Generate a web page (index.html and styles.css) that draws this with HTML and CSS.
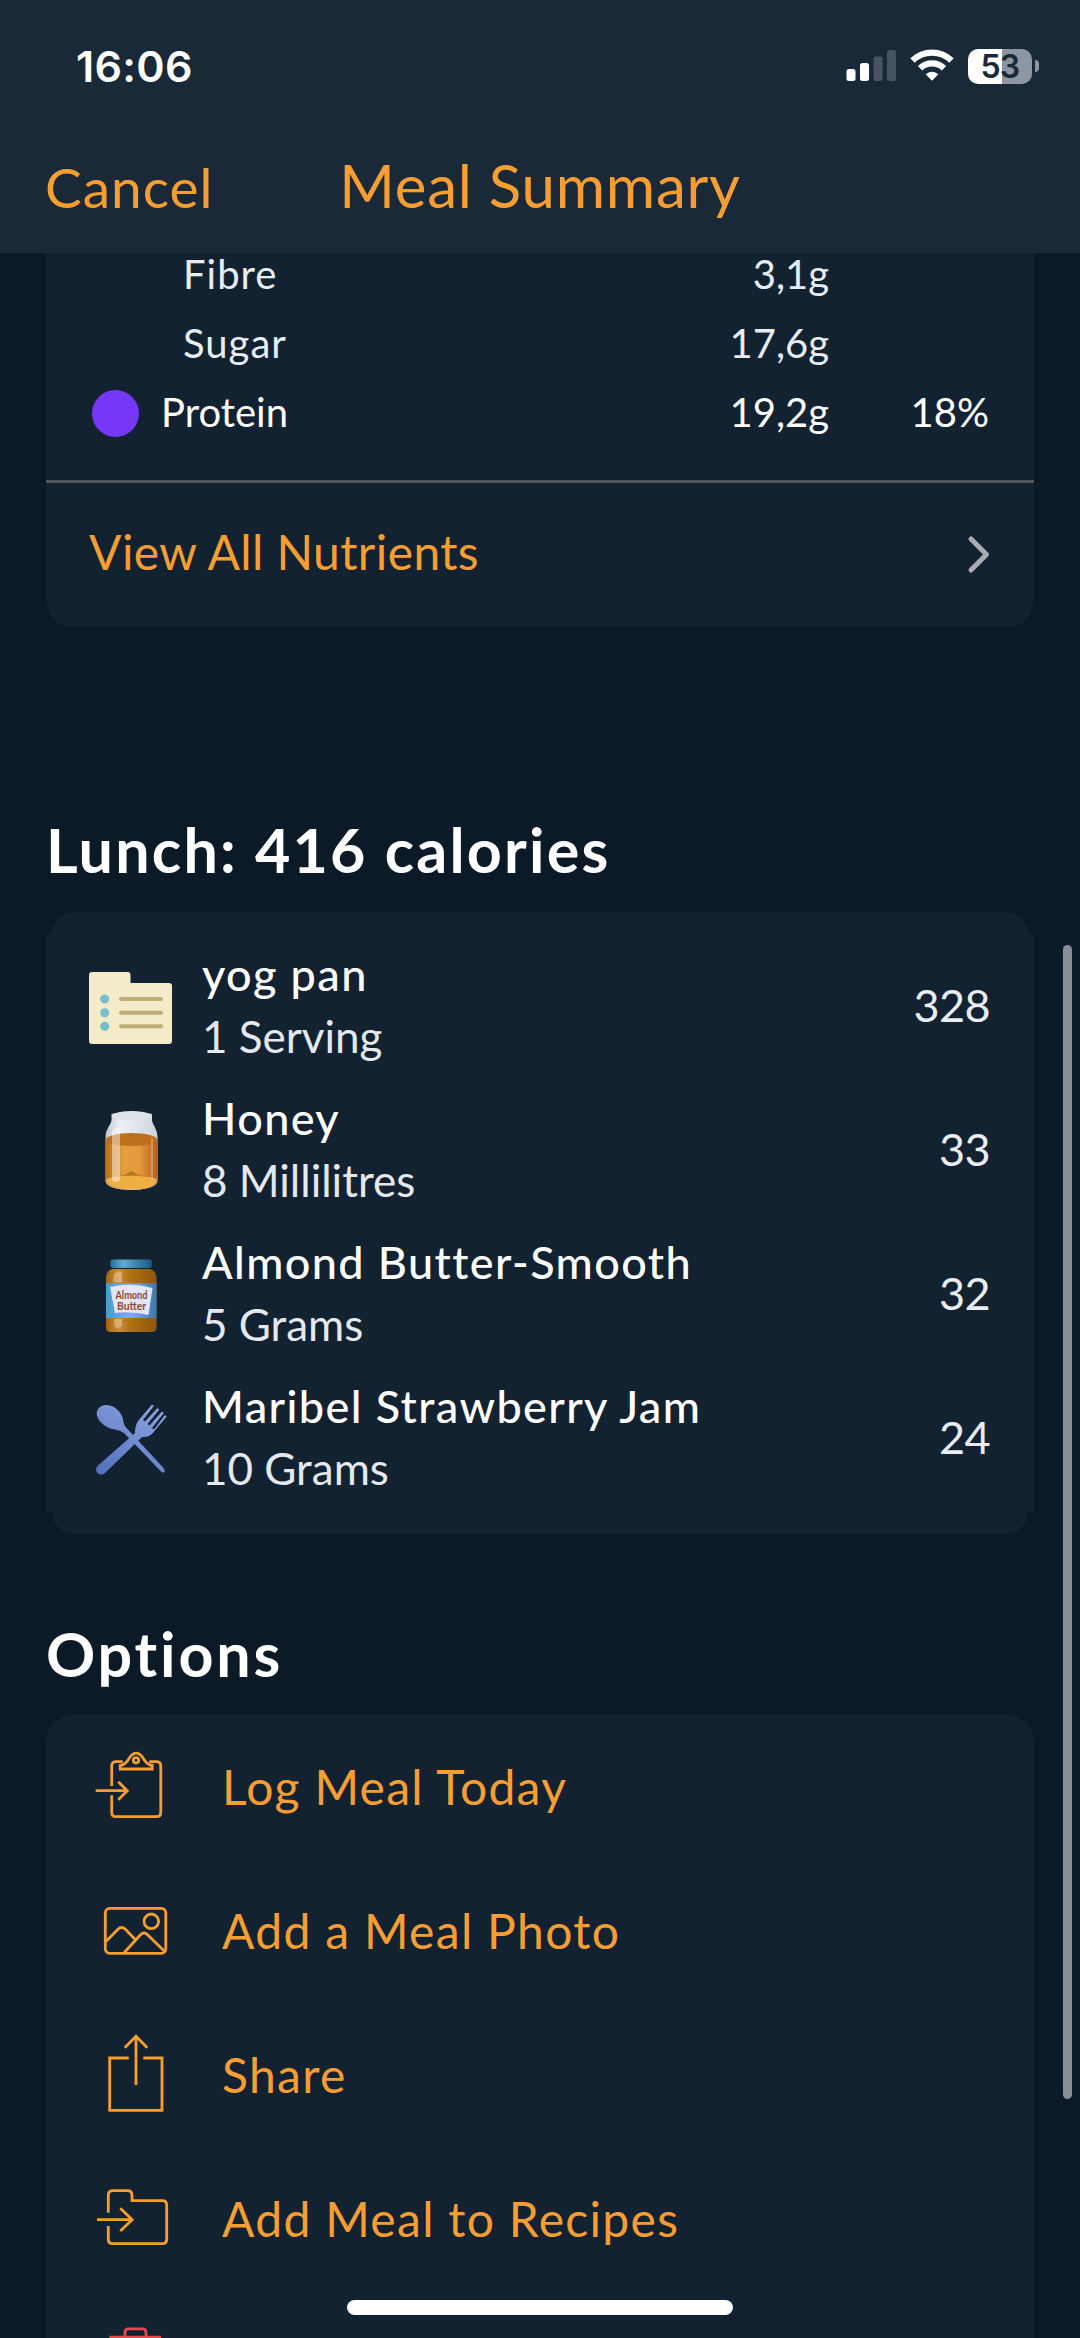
FILE: index.html
```html
<!DOCTYPE html>
<html lang="en">
<head>
    <meta charset="UTF-8">
    <meta name="viewport" content="width=device-width, initial-scale=1.0">
    <title>Meal Summary</title>
    <link rel="stylesheet" href="styles.css">
</head>
<body>

    <!-- Header -->
    <header class="header">
        <div class="status-bar">
            <span class="time">16:06</span>
            <div class="status-icons">
                <svg class="signal" width="50" height="36" viewBox="0 0 50 36">
                    <rect x="0.5" y="21" width="9" height="12" rx="2.5" fill="#fff"/>
                    <rect x="14" y="15" width="9" height="18" rx="2.5" fill="#fff"/>
                    <rect x="27.5" y="8.5" width="9" height="24.5" rx="2.5" fill="#475463"/>
                    <rect x="41" y="2" width="9" height="31" rx="2.5" fill="#475463"/>
                </svg>
                <svg class="wifi" width="44" height="36" viewBox="0 0 44 36" fill="none" stroke="#fff" stroke-width="6.2">
                    <path d="M2.5 12.5a28 28 0 0 1 39 0"/>
                    <path d="M10 20.2a17.5 17.5 0 0 1 24 0"/>
                    <path d="M22 32.8l-6.3-6.6a9 9 0 0 1 12.6 0z" fill="#fff" stroke="none"/>
                </svg>
                <div class="battery"><span>53</span></div>
                <div class="battery-tip"></div>
            </div>
        </div>
        <div class="nav">
            <a class="cancel">Cancel</a>
            <h1>Meal Summary</h1>
        </div>
    </header>

    <main class="content">

        <!-- Nutrients -->
        <section class="card nutrients">
            <div class="nutrient sub">
                <span class="label">Fibre</span>
                <span class="amount">3,1g</span>
                <span class="percent"></span>
            </div>
            <div class="nutrient sub">
                <span class="label">Sugar</span>
                <span class="amount">17,6g</span>
                <span class="percent"></span>
            </div>
            <div class="nutrient">
                <span class="dot"></span>
                <span class="label">Protein</span>
                <span class="amount">19,2g</span>
                <span class="percent">18%</span>
            </div>
            <a class="view-all">
                <span>View All Nutrients</span>
                <svg width="24" height="40" viewBox="0 0 24 40" fill="none" stroke="#a9abb1" stroke-width="5" stroke-linecap="round" stroke-linejoin="round">
                    <path d="M4 4L19.5 19.500L4 35"/>
                </svg>
            </a>
        </section>

        <!-- Foods -->
        <h2 class="foods-title">Lunch: 416 calories</h2>
        <section class="foods">
            <div class="foods-body">
                <div class="food">
                    <svg width="84" height="84" viewBox="0 0 84 84">
                        <path d="M3 8h35.500a3 3 0 0 1 3 3v8h38.500a3 3 0 0 1 3 3v55a3 3 0 0 1-3 3H3a3 3 0 0 1-3-3V11a3 3 0 0 1 3-3z" fill="#f3ebca"/>
                        <g fill="#74bfcb">
                            <circle cx="15.700" cy="35" r="4.500"/>
                            <circle cx="15.700" cy="48.700" r="4.500"/>
                            <circle cx="15.700" cy="62.300" r="4.500"/>
                        </g>
                        <path d="M32 35h40M32 48.700h40M32 62.300h40" stroke="#bfae76" stroke-width="4" stroke-linecap="round"/>
                    </svg>
                    <div class="food-text">
                        <div class="name">yog pan</div>
                        <div class="serving">1 Serving</div>
                    </div>
                    <span class="calories">328</span>
                </div>
                <div class="food">
                    <svg width="84" height="84" viewBox="0 0 84 84">
                        <defs>
                            <linearGradient id="glass" x1="0" x2="1">
                                <stop offset="0" stop-color="#c3c8d0"/>
                                <stop offset="0.3" stop-color="#eef0f4"/>
                                <stop offset="1" stop-color="#cfd3da"/>
                            </linearGradient>
                            <linearGradient id="honey" x1="0" x2="1">
                                <stop offset="0" stop-color="#b9701f"/>
                                <stop offset="0.35" stop-color="#e3a03c"/>
                                <stop offset="0.65" stop-color="#e39a3a"/>
                                <stop offset="1" stop-color="#b8602a"/>
                            </linearGradient>
                        </defs>
                        <path d="M22.500 6q20-6 40.500 0v6c0 4 5.500 9 5.500 17v44c0 12-52 12-52 0V29c0-8 6-13 6-17z" fill="url(#glass)"/>
                        <ellipse cx="42.700" cy="8" rx="19" ry="4.500" fill="#dfe2e8"/>
                        <path d="M17 31h51v42c0 11.500-51 11.500-51 0z" fill="url(#honey)"/>
                        <path d="M17.500 71c8-4 42-4 50 0v2c0 11-50 11-50 0z" fill="#eeb044"/>
                        <path d="M28 68.500q8-1 14.500-5.500q6 4.500 14 5.500q-14-2-28.500 0z" fill="#b87223"/>
                        <ellipse cx="42.500" cy="31.500" rx="25.500" ry="6.500" fill="#bd6f1b"/>
                        <path d="M23 22q3-3 8-2v52q-4 4-8 0z" fill="#fff" opacity="0.45"/>
                        <path d="M63 30v42" stroke="#f4c08a" stroke-width="1.500" opacity="0.6"/>
                    </svg>
                    <div class="food-text">
                        <div class="name">Honey</div>
                        <div class="serving">8 Millilitres</div>
                    </div>
                    <span class="calories">33</span>
                </div>
                <div class="food">
                    <svg width="84" height="84" viewBox="0 0 84 84">
                        <defs>
                            <linearGradient id="jar" x1="0" x2="1">
                                <stop offset="0" stop-color="#a0640f"/>
                                <stop offset="0.25" stop-color="#d08d35"/>
                                <stop offset="0.5" stop-color="#b06f12"/>
                                <stop offset="1" stop-color="#8e570c"/>
                            </linearGradient>
                            <linearGradient id="lid" x1="0" x2="1">
                                <stop offset="0" stop-color="#1f6f9c"/>
                                <stop offset="0.3" stop-color="#62abd0"/>
                                <stop offset="1" stop-color="#175a88"/>
                            </linearGradient>
                            <linearGradient id="band" x1="0" x2="1">
                                <stop offset="0" stop-color="#3f9fd0"/>
                                <stop offset="0.5" stop-color="#88a9ee"/>
                                <stop offset="1" stop-color="#3b78a8"/>
                            </linearGradient>
                        </defs>
                        <rect x="21.300" y="7.500" width="41.500" height="8.500" rx="3" fill="url(#lid)"/>
                        <path d="M23 17h38q6.500 2 6.500 9v50q0 4-5 4H22q-5 0-5-4V26q0-7 6-9z" fill="url(#jar)"/>
                        <rect x="17" y="31.300" width="50.500" height="34.700" fill="url(#band)"/>
                        <path d="M21 35q21-5 42.500 1l-4 27q-17-4-33.500-2z" fill="#e2e6f8"/>
                        <text class="jar-label" x="42.500" y="47" text-anchor="middle" textLength="32" lengthAdjust="spacingAndGlyphs">Almond</text>
                        <text class="jar-label" x="42.500" y="58" text-anchor="middle" textLength="29" lengthAdjust="spacingAndGlyphs">Butter</text>
                        <path d="M25 22q4-4 8-2v10h-9zM25 67h8v7q-4 4-8 0z" fill="#fff" opacity="0.3"/>
                    </svg>
                    <div class="food-text">
                        <div class="name">Almond Butter-Smooth</div>
                        <div class="serving">5 Grams</div>
                    </div>
                    <span class="calories">32</span>
                </div>
                <div class="food">
                    <svg width="84" height="84" viewBox="0 0 84 84">
                        <defs>
                            <linearGradient id="cutlery" gradientUnits="userSpaceOnUse" x1="60" y1="10" x2="15" y2="80">
                                <stop offset="0" stop-color="#8aa2e0"/>
                                <stop offset="1" stop-color="#5470bd"/>
                            </linearGradient>
                        </defs>
                        <g fill="url(#cutlery)">
                            <path d="M49 25L63 8.500l1.800 1.500L54 24l2 1.600L68.500 12l1.800 1.500L58.500 28l2 1.600L73 15.500l1.800 1.500L63 32l2 1.500L76 19l1.700 1.500L63 38q-4 3.500-10 3L16 77q-4 3-7.500 0q-3-3.500 0-7L46 37q0-7 3-12z"/>
                            <path d="M11 11c7-5 18 0 22 9c2 5 1 8 4.500 12l37 40q3 5-1.500 4.500L35 37q-4-3-9-3.500C13 32 2 18 11 11z"/>
                        </g>
                    </svg>
                    <div class="food-text">
                        <div class="name">Maribel Strawberry Jam</div>
                        <div class="serving">10 Grams</div>
                    </div>
                    <span class="calories">24</span>
                </div>
            </div>
        </section>

        <!-- Options -->
        <h2 class="options-title">Options</h2>
        <section class="card options">
            <a class="option">
                <svg width="96" height="96" viewBox="0 0 96 96">
                    <path d="M21.700 47V27.200q0-4.500 4.500-4.500h6.500M59.300 22.700h7q4.500 0 4.500 4.500v46q0 4.500-4.500 4.500H26.200q-4.500 0-4.500-4.500V56.300"/>
                    <path d="M30.200 30v-3.500c6-1 7-4.500 9.500-8q3-4.300 6.500-4.300t6.500 4.300c2.500 3.500 3.500 7 9.500 8V30z"/>
                    <circle cx="46" cy="21.300" r="2.700"/>
                    <path d="M5.700 51.700h31.500M28.300 42.700l9 9l-9 9"/>
                </svg>
                <span>Log Meal Today</span>
            </a>
            <a class="option">
                <svg width="96" height="96" viewBox="0 0 96 96">
                    <rect x="15.300" y="25.300" width="60.500" height="45" rx="4.500"/>
                    <circle cx="61.300" cy="38.300" r="7.300"/>
                    <path d="M15.700 58.700L28 46.200q3.700-3.400 7.400 0L45.700 57M34.300 69.500L50.500 51.800q3.500-3.400 7 0L75 68.700"/>
                </svg>
                <span>Add a Meal Photo</span>
            </a>
            <a class="option">
                <svg width="96" height="96" viewBox="0 0 96 96">
                    <path d="M38.700 31h-19v52.300H72V31H53.300M46 58V9.500M34.700 20.700L46 9.300l11.300 11.400"/>
                </svg>
                <span>Share</span>
            </a>
            <a class="option">
                <svg width="96" height="96" viewBox="0 0 96 96">
                    <path d="M18.300 41.700V24.200q0-4.500 4.500-4.500h14.700q4.500 0 4.500 4.500v5.500h30.200q4.500 0 4.500 4.500v34q0 4.500-4.500 4.500H22.800q-4.500 0-4.500-4.500V55"/>
                    <path d="M7 48.700h35M30.300 37.300l11.900 11.400L30.300 60"/>
                </svg>
                <span>Add Meal to Recipes</span>
            </a>
            <a class="option delete">
                <svg width="96" height="96" viewBox="0 0 96 96">
                    <path d="M35 21.700v-4.400q0-3.500 3.500-3.500h14q3.500 0 3.500 3.500v4.400M19.300 22.200H71M24 22v55h43V22"/>
                </svg>
            </a>
        </section>
    </main>

    <!-- Scroll bar and home indicator -->
    <div class="scrollbar"></div>
    <div class="home-indicator"></div>

</body>
</html>
```
FILE: styles.css
```css
* {
    box-sizing: border-box;
}

body {
    margin: 0;
    height: 2338px;
    overflow: hidden;
    position: relative;
    background-color: #0c1a28;
    color: #fff;
    font-family: Lato, "Open Sans", sans-serif;
    display: flex;
    flex-direction: column;
}

h1, h2 {
    margin: 0;
}

/* Header */
.header {
    background-color: #1a2938;
    height: 253px;
    flex-shrink: 0;
}

.status-bar {
    height: 132px;
    padding: 0 41px 0 76px;
    display: flex;
    justify-content: space-between;
    align-items: center;
    font-family: Inter, sans-serif;
}

.time {
    font-size: 43px;
    font-weight: 600;
    letter-spacing: 0.3px;
}

.status-icons {
    display: flex;
    align-items: center;
}

.wifi {
    margin-left: 14px;
}

.battery {
    width: 64px;
    height: 35px;
    margin-left: 14px;
    border-radius: 10px;
    background: linear-gradient(to right, #fff 53%, #8d96a1 53%);
    color: #1a2938;
    font-size: 32px;
    font-weight: 600;
    letter-spacing: -0.8px;
    line-height: 35px;
    text-align: center;
}

.battery-tip {
    width: 4px;
    height: 12px;
    margin-left: 3px;
    border-radius: 0 4px 4px 0;
    background-color: #8d96a1;
}

.nav {
    padding: 0 45px;
    display: grid;
    grid-template-columns: 1fr auto 1fr;
    align-items: baseline;
    color: #f79e33;
    line-height: 106px;
}

.cancel {
    font-size: 55px;
    letter-spacing: 1px;
}

.nav h1 {
    font-size: 60px;
    font-weight: 400;
    letter-spacing: 0.75px;
}

/* Content */
.content {
    flex: 1;
    min-height: 0;
    padding: 0 46px;
}

.card {
    background-color: #132231;
    border-radius: 26px;
}

/* Nutrients */
.nutrients {
    display: flex;
    flex-direction: column;
    border-radius: 0 0 26px 26px;
}

.nutrient {
    height: 69px;
    padding: 0 45px 0 46px;
    display: flex;
    align-items: center;
    font-size: 40px;
}

.nutrient:first-child {
    margin-top: -15px; /* scrolled up under the header */
}

.nutrient .label {
    flex: 1;
}

.nutrient .label,
.nutrient .amount,
.nutrient .percent {
    padding-top: 2px;
}

.nutrient.sub {
    padding-left: 137px;
    color: #e8ecf4;
}

.nutrient.sub .label {
    letter-spacing: 1px;
}

.dot {
    width: 47px;
    height: 47px;
    margin: 5px 22px 0 0;
    border-radius: 50%;
    background-color: #7438f6;
}

.percent {
    width: 160px;
    text-align: right;
}

.view-all {
    margin-top: 35px;
    height: 147px;
    padding: 0 43px;
    border-top: 3px solid #54575a;
    display: flex;
    justify-content: space-between;
    align-items: center;
    color: #f79e33;
    font-size: 48px;
    letter-spacing: 0.4px;
}

.view-all span {
    padding-bottom: 7px;
}

/* Section titles */
h2 {
    font-size: 61px;
    font-weight: 700;
    line-height: 72px;
    letter-spacing: 2.2px;
}

.foods-title {
    margin: 187px 0 26px;
}

.options-title {
    margin: 84px 0 25px;
    letter-spacing: 2.8px;
}

/* Foods */
.foods::before,
.foods::after {
    content: "";
    display: block;
    height: 22px;
    margin: 0 6px;
    background-color: #132231;
    border-radius: 24px 24px 0 0;
}

.foods::after {
    border-radius: 0 0 24px 24px;
}

.foods-body {
    padding: 0 44px 2px 43px;
    background-color: #132231;
}

.food {
    height: 144px;
    padding-bottom: 3px;
    display: flex;
    align-items: center;
}

.food svg {
    margin-top: 3px;
}

.food-text {
    flex: 1;
    margin-left: 29px;
    line-height: 62px;
}

.name {
    font-size: 45px;
    font-weight: 500;
    letter-spacing: 1.4px;
}

.serving {
    font-size: 44px;
    color: #e4e8ef;
}

.calories {
    font-size: 45px;
    letter-spacing: -0.6px;
    color: #e9ecf2;
}

.jar-label {
    font-size: 11px;
    font-weight: 700;
    fill: #8a4a2c;
}

/* Options */
.option {
    height: 144px;
    padding-left: 44px;
    display: flex;
    align-items: center;
    color: #f79e33;
    font-size: 48px;
    letter-spacing: 1.3px;
}

.option svg {
    fill: none;
    stroke: #f79e33;
    stroke-width: 2.8;
}

.option span {
    margin-left: 36px;
    padding-bottom: 1px;
}

.option.delete svg {
    stroke: #e5484d;
}

/* Overlays */
.scrollbar {
    position: absolute;
    top: 945px;
    left: 1063px;
    width: 9px;
    height: 1154px;
    border-radius: 5px;
    background-color: #868e98;
}

.home-indicator {
    position: absolute;
    top: 2300px;
    left: 347px;
    width: 386px;
    height: 15px;
    border-radius: 8px;
    background-color: #fff;
}
```
